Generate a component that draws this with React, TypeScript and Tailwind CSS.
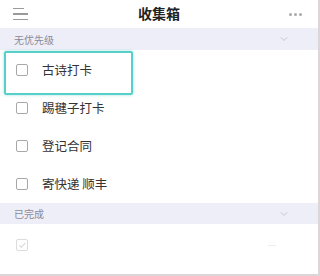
import { ChevronDown } from "lucide-react";

const TASKS = ["古诗打卡", "踢毽子打卡", "登记合同", "寄快递 顺丰"];

function Box({ done }: { done?: boolean }) {
  return (
    <span className={`flex h-[12px] w-[12px] items-center justify-center rounded-[2px] border ${done ? "border-[#dcdcdc]" : "border-[#a8a8a8]"}`}>
      {done && (
        <svg viewBox="0 0 12 12" className="h-[11px] w-[11px]" fill="none" stroke="#d4d4d4" strokeWidth="1.3">
          <path d="M3 6l2.2 2.2L10 3" />
        </svg>
      )}
    </span>
  );
}

export default function App() {
  return (
    <div className="relative h-[276px] w-[320px] overflow-hidden border-r-2 border-b-2 border-[#ddd6d8] bg-white font-['Noto_Sans_CJK_SC','Noto_Sans',sans-serif]">
      <div className="flex h-[28px] items-center px-[13px]">
        <div className="flex w-[16px] flex-col gap-[4px]">
          <span className="h-[1.5px] w-[11px] bg-[#9a9a9a]" />
          <span className="h-[1.5px] w-[15px] bg-[#9a9a9a]" />
          <span className="h-[1.5px] w-[15px] bg-[#9a9a9a]" />
        </div>
        <div className="flex-1 pb-[2px] text-center text-[14px] font-bold text-[#222]">收集箱</div>
        <div className="flex w-[16px] gap-[2px]">
          <span className="h-[3px] w-[3px] rounded-full bg-[#aaa]" />
          <span className="h-[3px] w-[3px] rounded-full bg-[#aaa]" />
          <span className="h-[3px] w-[3px] rounded-full bg-[#aaa]" />
        </div>
      </div>

      <div className="flex h-[22px] items-center justify-between bg-[#eeeef8] pl-[14px] pr-[28px] text-[10px] text-[#8a8a99]">
        <span>无优先级</span>
        <ChevronDown className="h-[12px] w-[12px] text-[#c6c6d4]" />
      </div>

      <div className="pt-[1px]">
        {TASKS.map((t) => (
          <div key={t} className="flex h-[38px] items-center pl-[16px]">
            <Box />
            <span className="ml-[14px] text-[12.5px] text-[#333]">{t}</span>
          </div>
        ))}
      </div>

      <div className="flex h-[21px] items-center justify-between bg-[#eeeef8] pl-[14px] pr-[28px] text-[10px] text-[#8a8a99]">
        <span>已完成</span>
        <ChevronDown className="h-[12px] w-[12px] text-[#c6c6d4]" />
      </div>

      <div className="flex h-[42px] items-center justify-between pl-[16px] pr-[42px]">
        <Box done />
        <span className="h-[1px] w-[8px] bg-[#eee]" />
      </div>

      <div className="absolute left-[4px] top-[51px] h-[44px] w-[129px] rounded-[2px] border-[2.5px] border-[#58cfc8] shadow-[0_0_3px_rgba(88,207,200,0.6)]" />
    </div>
  );
}
